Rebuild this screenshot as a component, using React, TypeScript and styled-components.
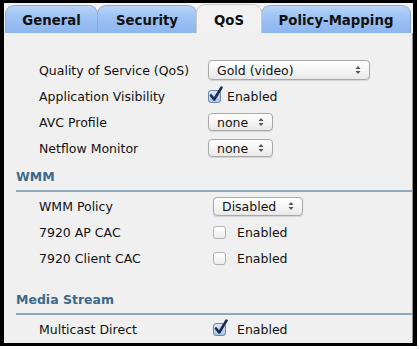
import React from "react";
import styled, { createGlobalStyle } from "styled-components";

const GlobalStyle = createGlobalStyle`
  body {
    margin: 0;
    background: #ffffff;
  }
`;

const Frame = styled.div`
  width: 417px;
  height: 346px;
  box-sizing: border-box;
  border-style: solid;
  border-color: #000;
  border-width: 3px 4px 3px 4px;
  background: #f7f7f7;
  display: flex;
  flex-direction: column;
  overflow: hidden;
`;

const TabBar = styled.div`
  height: 30px;
  display: flex;
  align-items: flex-end;
  padding-left: 1px;
  background: #f4f4f4;
`;

const Tab = styled.div<{ $active?: boolean; $width: number }>`
  width: ${(p) => p.$width}px;
  height: ${(p) => (p.$active ? 29 : 28)}px;
  box-sizing: border-box;
  display: flex;
  align-items: center;
  justify-content: center;
  padding-top: 2px;
  margin-right: -1px;
  border: 1px solid ${(p) => (p.$active ? "#c8c8c8" : "#8ea9cf")};
  border-bottom: none;
  border-radius: 9px 9px 0 0;
  background: ${(p) =>
    p.$active
      ? "#f1f1f1"
      : "linear-gradient(#b9d4f8, #9cc1f3 45%, #8db6ef)"};
  font-family: "DejaVu Sans", Verdana, sans-serif;
  font-weight: bold;
  font-size: 13.3px;
  color: #111;
  position: relative;
  z-index: ${(p) => (p.$active ? 2 : 1)};
`;

const Panel = styled.div`
  flex: 1;
  background: #f0f0f0;
  border-right: 1px solid #8c8c8c;
  padding-top: 24px;
  font-family: "DejaVu Sans", Verdana, sans-serif;
  font-size: 12.5px;
  color: #111;
`;

const Row = styled.div<{ $labelWidth: number }>`
  height: 26px;
  display: grid;
  grid-template-columns: ${(p) => p.$labelWidth}px 1fr;
  align-items: center;
  padding-left: 35px;
`;

const Label = styled.span`
  white-space: nowrap;
`;

const SectionHeader = styled.div<{ $gap: number }>`
  margin-top: ${(p) => p.$gap}px;
  margin-left: 12px;
  padding-bottom: 5px;
  border-bottom: 2px solid #8fa9bd;
  font-weight: bold;
  font-size: 12.5px;
  color: #3c6a8a;
  line-height: 16px;
  margin-bottom: 1px;
`;

const SelectBox = styled.div<{ $width: number; $height: number }>`
  width: ${(p) => p.$width}px;
  height: ${(p) => p.$height}px;
  box-sizing: border-box;
  display: flex;
  align-items: center;
  justify-content: space-between;
  padding: 0 8px 0 8px;
  border: 1px solid #a9a9a9;
  border-radius: 4px;
  background: linear-gradient(#ffffff, #f3f3f3 60%, #e8e8e8);
  box-shadow: 0 1px 1px rgba(0, 0, 0, 0.12);
  font-size: 12.5px;
  color: #111;
`;

const Arrows = styled.svg`
  flex: none;
`;

const CheckWrap = styled.label<{ $gap: number }>`
  display: flex;
  align-items: center;
  gap: ${(p) => p.$gap}px;
`;

const Box = styled.span<{ $checked?: boolean }>`
  width: 13px;
  height: 13px;
  box-sizing: border-box;
  border-radius: 3px;
  border: 1px solid ${(p) => (p.$checked ? "#6d88ad" : "#b1b1b1")};
  background: ${(p) =>
    p.$checked
      ? "linear-gradient(#d9e7f8, #a9c6ec)"
      : "linear-gradient(#ffffff, #ececec)"};
  position: relative;
  flex: none;
`;

const Tick = styled.svg`
  position: absolute;
  left: 0px;
  top: -5px;
`;

function Select({ value, width, height }: { value: string; width: number; height: number }) {
  return (
    <SelectBox $width={width} $height={height}>
      <span>{value}</span>
      <Arrows width="6" height="10" viewBox="0 0 6 10">
        <path d="M3 1 L5.5 4 L0.5 4 Z" fill="#555" />
        <path d="M3 9 L5.5 6 L0.5 6 Z" fill="#555" />
      </Arrows>
    </SelectBox>
  );
}

function Check({ checked, gap }: { checked?: boolean; gap: number }) {
  return (
    <CheckWrap $gap={gap}>
      <Box $checked={checked}>
        {checked && (
          <Tick width="14" height="16" viewBox="0 0 14 16">
            <path
              d="M2 9.5 L5.2 13.5 L12.5 1.5"
              stroke="#1c2c4a"
              strokeWidth="2.6"
              fill="none"
              strokeLinecap="round"
              strokeLinejoin="round"
            />
          </Tick>
        )}
      </Box>
      <span>Enabled</span>
    </CheckWrap>
  );
}

export default function App() {
  return (
    <>
      <GlobalStyle />
      <Frame>
        <TabBar>
          <Tab $width={93}>General</Tab>
          <Tab $width={100}>Security</Tab>
          <Tab $width={66} $active>
            QoS
          </Tab>
          <Tab $width={150}>Policy-Mapping</Tab>
        </TabBar>
        <Panel>
          <Row $labelWidth={169}>
            <Label>Quality of Service (QoS)</Label>
            <Select value="Gold (video)" width={162} height={20} />
          </Row>
          <Row $labelWidth={169}>
            <Label>Application Visibility</Label>
            <Check checked gap={6} />
          </Row>
          <Row $labelWidth={169}>
            <Label>AVC Profile</Label>
            <Select value="none" width={65} height={18} />
          </Row>
          <Row $labelWidth={169}>
            <Label>Netflow Monitor</Label>
            <Select value="none" width={65} height={18} />
          </Row>

          <SectionHeader $gap={8}>WMM</SectionHeader>
          <Row $labelWidth={174}>
            <Label>WMM Policy</Label>
            <Select value="Disabled" width={90} height={19} />
          </Row>
          <Row $labelWidth={174}>
            <Label>7920 AP CAC</Label>
            <Check gap={11} />
          </Row>
          <Row $labelWidth={174}>
            <Label>7920 Client CAC</Label>
            <Check gap={11} />
          </Row>

          <SectionHeader $gap={21}>Media Stream</SectionHeader>
          <Row $labelWidth={174}>
            <Label>Multicast Direct</Label>
            <Check checked gap={11} />
          </Row>
        </Panel>
      </Frame>
    </>
  );
}
